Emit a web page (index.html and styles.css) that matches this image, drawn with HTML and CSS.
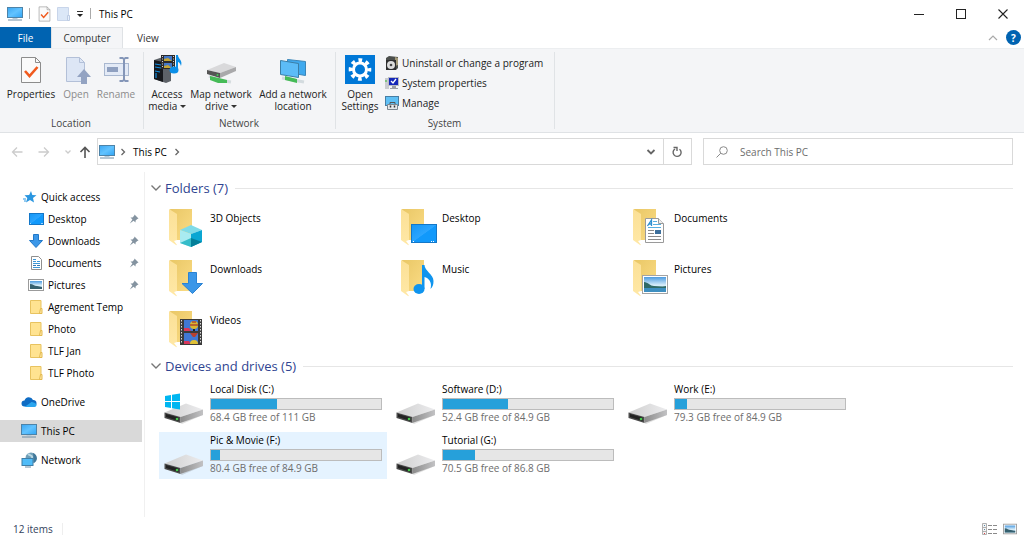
FILE: index.html
```html
<!DOCTYPE html>
<html lang="en">
<head>
    <meta charset="utf-8">
    <title>This PC</title>
    <link rel="stylesheet" href="styles.css">
</head>

<body>
    <!-- shared icons -->
    <svg class="sprite" aria-hidden="true">
        <defs>
            <linearGradient id="screenblue" x1="0" y1="0" x2="1" y2="1">
                <stop offset="0" stop-color="#3aa6f2" />
                <stop offset="0.5" stop-color="#62c3ff" />
                <stop offset="1" stop-color="#2fa4f5" />
            </linearGradient>
            <linearGradient id="deskblue" x1="0" y1="0" x2="1" y2="1">
                <stop offset="0" stop-color="#1496f5" />
                <stop offset="0.5" stop-color="#2ba5ff" />
                <stop offset="0.52" stop-color="#1199fb" />
                <stop offset="1" stop-color="#1199fb" />
            </linearGradient>
            <linearGradient id="folderback" x1="0" y1="0" x2="1" y2="1">
                <stop offset="0" stop-color="#e9c766" />
                <stop offset="1" stop-color="#fbdc85" />
            </linearGradient>
            <linearGradient id="folderflap" x1="0" y1="0" x2="0" y2="1">
                <stop offset="0" stop-color="#fbe096" />
                <stop offset="1" stop-color="#ffe8a6" />
            </linearGradient>
            <linearGradient id="landscape" x1="0" y1="0" x2="0" y2="1">
                <stop offset="0" stop-color="#4c9be0" />
                <stop offset="0.55" stop-color="#d9eefa" />
                <stop offset="1" stop-color="#8fc3dd" />
            </linearGradient>
            <linearGradient id="drivetop" x1="0" y1="0" x2="1" y2="0">
                <stop offset="0" stop-color="#cfcfcf" />
                <stop offset="1" stop-color="#ececee" />
            </linearGradient>
            <linearGradient id="driveside" x1="0" y1="0" x2="1" y2="0">
                <stop offset="0" stop-color="#8b8b8b" />
                <stop offset="1" stop-color="#c2c2c4" />
            </linearGradient>
        </defs>
        <symbol id="pc" viewBox="0 0 16 16">
            <rect x="0.5" y="1.500" width="15" height="10" fill="url(#screenblue)" stroke="#4d83a8" />
            <path d="M5.500 12h5v1h-5z" fill="#b9cbd8" />
            <path d="M1 14h14" stroke="#6f8ea6" />
        </symbol>
        <symbol id="doccheck" viewBox="0 0 22 28">
            <path d="M1.500 1.500h14l5 5v20h-19z" fill="#fafafa" stroke="#8c8c8c" />
            <path d="M15.500 1.500v5h5" fill="none" stroke="#8c8c8c" />
            <path d="M5 15l4.500 5 8-9" fill="none" stroke="#f05a1e" stroke-width="2.600" />
        </symbol>
        <symbol id="chevdown" viewBox="0 0 12 12">
            <path d="M1.500 3.500L6 8l4.500-4.500" fill="none" stroke="currentColor" stroke-width="1.400" />
        </symbol>
        <symbol id="chevright" viewBox="0 0 8 8">
            <path d="M2.500 1l3 3-3 3" fill="none" stroke="currentColor" stroke-width="1.300" />
        </symbol>
        <symbol id="pin" viewBox="0 0 10 10">
            <path d="M5.500 0.500l4 4-1.200 0.400L6.600 6.600 6.500 8.500 4.600 6.700 0.800 9.500 3.400 5.500 1.500 3.500l2-0.100L5.200 1.700z" fill="#8493a0" />
        </symbol>
        <symbol id="smallfolder" viewBox="0 0 16 16">
            <path d="M2.500 1.500h10.500v13h-10.500z" fill="#ffe391" stroke="#e8c360" />
            <path d="M12.500 9.500h1.500v5h-2.500z" fill="#ffe9a8" stroke="#e3b94e" />
        </symbol>
        <symbol id="picture" viewBox="0 0 16 16">
            <rect x="0.500" y="2.500" width="15" height="11" fill="#fff" stroke="#9b9b9b" />
            <rect x="2" y="4" width="12" height="8" fill="url(#landscape)" />
            <path d="M2 7c3 0 4 2 7 2 2 0 3 1 5 1v2H2z" fill="#35606f" />
        </symbol>
        <symbol id="folder" viewBox="0 0 40 40">
            <path d="M6 2h22v31H12z" fill="url(#folderback)" />
            <path d="M5 2l8 5v30.500c0 0.700-0.500 0.800-1 0.500l-7-5z" fill="url(#folderflap)" />
            <path d="M10 34l3-1v5z" fill="#fff" />
        </symbol>
        <symbol id="drive" viewBox="0 0 40 40">
            <path d="M1 30l16 8 22-10v2L18 39z" fill="#000" opacity="0.120" />
            <path d="M0.500 27.500L22 18.500l17 6-22.500 7.500z" fill="url(#drivetop)" />
            <path d="M0.500 27.500l16 4.500v6L0.500 33z" fill="#4a4a4a" />
            <path d="M2 29l12.500 3.500v3.500L2 32z" fill="#222" />
            <path d="M16.500 32L39 24.500V30l-22.500 8z" fill="url(#driveside)" />
            <circle cx="13" cy="34" r="1.300" fill="#45c74c" />
        </symbol>
    </svg>

    <header class="titlebar">
        <svg class="icon16"><use href="#pc" /></svg>
        <span class="tick"></span>
        <button class="quick" aria-label="Properties"><svg width="13" height="16"><use href="#doccheck" /></svg></button>
        <button class="quick" aria-label="New folder">
            <svg width="13" height="16"><path d="M0.500 1.500h11v13H0.500z" fill="#dbe7f7" stroke="#c8d5ea" /><path d="M10.500 9.500h2v5h-2z" fill="#e6effb" stroke="#bccbe3" /></svg>
        </button>
        <button class="quick" aria-label="Customize toolbar">
            <svg width="8" height="8"><path d="M1 1.500h6" stroke="#333" /><path d="M1 4h6L4 7z" fill="#222" /></svg>
        </button>
        <span class="tick"></span>
        <h1>This PC</h1>
        <div class="window-buttons">
            <button aria-label="Minimize"><svg width="10" height="10"><path d="M0 5.500h10" stroke="#222" /></svg></button>
            <button aria-label="Maximize"><svg width="10" height="10"><rect x="0.500" y="0.500" width="9" height="9" fill="none" stroke="#222" /></svg></button>
            <button aria-label="Close"><svg width="10" height="10"><path d="M0.500 0.500l9 9M9.500 0.500l-9 9" stroke="#222" stroke-width="1.100" /></svg></button>
        </div>
    </header>

    <nav class="tabs">
        <button class="tab file">File</button>
        <button class="tab active">Computer</button>
        <button class="tab">View</button>
        <div class="tabs-end">
            <button aria-label="Collapse ribbon"><svg width="10" height="10"><path d="M1 7l4-4 4 4" fill="none" stroke="#aaa" stroke-width="1.200" /></svg></button>
            <button class="help" aria-label="Help">?</button>
        </div>
    </nav>

    <section class="ribbon">
        <div class="group">
            <div class="tools">
                <button class="tool properties">
                    <svg width="32" height="32"><use href="#doccheck" x="5" y="4" width="22" height="28" /></svg>
                    Properties
                </button>
                <button class="tool open" disabled>
                    <svg width="32" height="32">
                        <path d="M6.500 5.500h13l5 5v19h-18z" fill="#dde6f5" stroke="#b3c0d8" />
                        <path d="M19.500 5.500v5h5" fill="none" stroke="#b3c0d8" />
                        <path d="M17 25l7-8 7 8h-4v7h-6v-7z" fill="#93a3c2" />
                    </svg>
                    Open
                </button>
                <button class="tool rename" disabled>
                    <svg width="32" height="32">
                        <rect x="4.500" y="11.500" width="24" height="12" fill="#e3eaf6" stroke="#a9b8d0" />
                        <rect x="7" y="15" width="11" height="5" fill="#8fa0c0" />
                        <path d="M19.500 6h3l1.500 1 1.500-1h3M19.500 29h3l1.500-1 1.500 1h3M24 7v21" fill="none" stroke="#8496b8" stroke-width="2" />
                    </svg>
                    Rename
                </button>
            </div>
            <h2>Location</h2>
        </div>

        <div class="group">
            <div class="tools">
                <button class="tool access">
                    <svg width="32" height="32">
                        <path d="M3 8l9-3 8 2v22l-5 2-12-4z" fill="#5d6268" />
                        <path d="M3 8l9 2v20l-9-3z" fill="#17191d" />
                        <path d="M4 12l6 1M4 15l6 1M5 21v5M4 19l5 1" stroke="#148ee0" stroke-width="1.200" />
                        <rect x="10" y="3" width="14" height="14" fill="#2b2b2b" />
                        <path d="M11.500 4v12M22.500 4v12" stroke="#d0d0d0" stroke-dasharray="1 1.500" />
                        <path d="M13 4h8v5h-8zM13 11h8v5h-8z" fill="#4478c8" />
                        <path d="M13 7l4-1 4 3h-8zM13 14l4-1 4 3h-8z" fill="#c6a634" />
                        <ellipse cx="23" cy="18" rx="4.500" ry="3.500" fill="#0b8fe8" />
                        <path d="M25 3h2c0 4 5 5 3 11-1-3-2-4-3-4v8h-2z" fill="#0b8fe8" />
                    </svg>
                    <span>Access<br>media <i class="caret"></i></span>
                </button>
                <button class="tool map">
                    <svg width="32" height="32">
                        <path d="M4 24l8 4 14 2" fill="none" stroke="#d5dcdf" stroke-width="3" />
                        <path d="M5 24l9 2 8 2v3H13l-8-3z" fill="#45bb57" />
                        <path d="M2 18l17-7 12 4-16 6z" fill="#d9d9db" />
                        <path d="M2 18l13 3v5L2 22z" fill="#555" />
                        <path d="M15 21l16-6v4l-16 7z" fill="#a9a9ab" />
                        <circle cx="12.500" cy="23" r="1" fill="#4c5" />
                    </svg>
                    <span>Map network<br>drive <i class="caret"></i></span>
                </button>
                <button class="tool add">
                    <svg width="32" height="32">
                        <path d="M10.500 7.500l18 2v14l-18-3z" fill="#3fa9ee" stroke="#3b86b8" />
                        <path d="M5 26l22 4" stroke="#d3dbdf" stroke-width="3" />
                        <path d="M8 24l12 3v4l-12-3z" fill="#45bb57" />
                        <path d="M3.500 8.500l18 3v14l-18-3z" fill="#5cbcf7" stroke="#3b7fa8" />
                    </svg>
                    <span>Add a network<br>location</span>
                </button>
            </div>
            <h2>Network</h2>
        </div>

        <div class="group">
            <div class="tools">
                <button class="tool settings">
                    <svg width="32" height="32">
                        <rect x="1" y="3" width="30" height="29" fill="#0078d7" />
                        <circle cx="16" cy="17.500" r="9.300" fill="none" stroke="#fff" stroke-width="4" stroke-dasharray="3.650 3.650" stroke-dashoffset="1.800" />
                        <circle cx="16" cy="17.500" r="6.500" fill="none" stroke="#fff" stroke-width="3" />
                    </svg>
                    <span>Open<br>Settings</span>
                </button>
                <ul class="commands">
                    <li><button>
                        <svg width="14" height="16"><path d="M1 3l3-2 9 1v11l-2 2H1z" fill="#4c4f4c" /><path d="M10 2l3 1v7l-3 1z" fill="#a49a79" /><rect x="1" y="5" width="10" height="10" fill="#2e2e2e" /><circle cx="6" cy="10" r="4" fill="#dcdcdc" /><circle cx="6" cy="10" r="1.300" fill="#444" /></svg>
                        Uninstall or change a program
                    </button></li>
                    <li><button>
                        <svg width="14" height="16"><path d="M0 3h4v11H0z" fill="#c9ccd0" /><path d="M1 5v2" stroke="#3b3" /><rect x="3.500" y="2.500" width="10" height="8" fill="#1527b8" stroke="#b9bcc4" /><path d="M6 6l2 2 3-4" fill="none" stroke="#fff" stroke-width="1.300" /><path d="M7 11h4v2h2v1H5v-1h2z" fill="#9a9da4" /></svg>
                        System properties
                    </button></li>
                    <li><button>
                        <svg width="14" height="16"><rect x="0.500" y="1.500" width="13" height="9" fill="#5fc0f5" stroke="#477ea4" /><path d="M2.500 9.500h10v5h-10z" fill="#e6e9eb" stroke="#7c8790" /><path d="M5 9V7.500h5V9" fill="none" stroke="#555" /><path d="M5.500 10.500v2M9.500 10.500v2" stroke="#333" stroke-width="1.500" /></svg>
                        Manage
                    </button></li>
                </ul>
            </div>
            <h2>System</h2>
        </div>
    </section>

    <section class="navbar">
        <div class="history">
            <button aria-label="Back" disabled><svg width="12" height="12"><path d="M11.500 6H1.500M6 1.500L1.500 6 6 10.500" /></svg></button>
            <button aria-label="Forward" disabled><svg width="12" height="12"><path d="M0.500 6h10M6 1.500L10.500 6 6 10.500" /></svg></button>
            <button class="recent" aria-label="Recent locations" disabled><svg width="6" height="6"><path d="M0.500 1.500L3 4l2.500-2.500" /></svg></button>
            <button class="up" aria-label="Up"><svg width="12" height="12"><path d="M6 12V1.500M1.500 6L6 1.500 10.500 6" /></svg></button>
        </div>
        <div class="address">
            <svg class="icon16"><use href="#pc" /></svg>
            <svg class="crumb-arrow"><use href="#chevright" /></svg>
            <a href="#">This PC</a>
            <svg class="crumb-arrow"><use href="#chevright" /></svg>
            <button class="previous" aria-label="Previous locations"><svg width="10" height="10"><path d="M1.500 3L5 6.500 8.500 3" fill="none" stroke="#666" stroke-width="1.800" /></svg></button>
            <button class="refresh" aria-label="Refresh"><svg width="12" height="12"><path d="M8.500 3.200A4 4 0 1 1 4 3" fill="none" stroke="#666" stroke-width="1.400" /><path d="M2.500 1.500H6V5" fill="none" stroke="#666" stroke-width="1.400" /></svg></button>
        </div>
        <label class="search">
            <svg width="12" height="12"><circle cx="7.500" cy="4.500" r="3.800" fill="none" stroke="#8a8a8a" /><path d="M4.800 7.200L0.500 11.500" stroke="#8a8a8a" /></svg>
            <input type="text" placeholder="Search This PC" aria-label="Search This PC">
        </label>
    </section>

    <div class="main">
        <nav class="sidebar">
            <ul>
                <li><a href="#">
                    <svg class="icon16" viewBox="0 0 16 16"><path d="M10 2l1.300 4 4.200 0.300-3.500 2.700 1 4.500-4-2.500-4 2.500 1.300-4.500L3.500 6.300l4.700-0.300z" fill="#2a96e0" /><path d="M2 10h3M3 12h2" stroke="#2a96e0" /></svg>
                    Quick access
                </a></li>
                <li class="sub"><a href="#">
                    <svg class="icon16" viewBox="0 0 16 16"><rect x="1.500" y="2.500" width="14" height="11" fill="url(#deskblue)" stroke="#1377c8" /><path d="M2 12.500h1M13 12.500h2" stroke="#9fd4ff" /></svg>
                    Desktop
                    <svg class="pin"><use href="#pin" /></svg>
                </a></li>
                <li class="sub"><a href="#">
                    <svg class="icon16" viewBox="0 0 16 16"><path d="M5.500 1.500h5v6h4L8 14.500 1.500 7.500h4z" fill="#3b97e8" stroke="#2178c8" /></svg>
                    Downloads
                    <svg class="pin"><use href="#pin" /></svg>
                </a></li>
                <li class="sub"><a href="#">
                    <svg class="icon16" viewBox="0 0 16 16"><path d="M3.500 1.500h7l3 3v10h-10z" fill="#fff" stroke="#8f8f8f" /><path d="M5 4.500h3M5 6.500h3M9 6.500h3M5 8.500h7M5 12.500h7" stroke="#3d97d6" /><path d="M5 10.500h3M9 10.500h3" stroke="#3778b0" /></svg>
                    Documents
                    <svg class="pin"><use href="#pin" /></svg>
                </a></li>
                <li class="sub"><a href="#">
                    <svg class="icon16"><use href="#picture" /></svg>
                    Pictures
                    <svg class="pin"><use href="#pin" /></svg>
                </a></li>
                <li class="sub"><a href="#"><svg class="icon16"><use href="#smallfolder" /></svg> Agrement Temp</a></li>
                <li class="sub"><a href="#"><svg class="icon16"><use href="#smallfolder" /></svg> Photo</a></li>
                <li class="sub"><a href="#"><svg class="icon16"><use href="#smallfolder" /></svg> TLF Jan</a></li>
                <li class="sub"><a href="#"><svg class="icon16"><use href="#smallfolder" /></svg> TLF Photo</a></li>
            </ul>
            <ul>
                <li><a href="#">
                    <svg class="icon16" viewBox="0 0 16 16"><path d="M3.500 12.500a3 3 0 0 1 0-6 4.500 4.500 0 0 1 8.500-0.500 3.300 3.300 0 0 1 1 6.500z" fill="#0f6cc4" /><path d="M3.500 13l7-5c1 0 5 1 5 3 0 1-1 2-2 2z" fill="#2aa5ee" /></svg>
                    OneDrive
                </a></li>
            </ul>
            <ul>
                <li class="selected"><a href="#"><svg class="icon16"><use href="#pc" /></svg> This PC</a></li>
            </ul>
            <ul>
                <li><a href="#">
                    <svg class="icon16" viewBox="0 0 16 16"><circle cx="10" cy="6" r="5.500" fill="#6f9fb8" /><path d="M7 2c2 2 5 1 4 4" fill="none" stroke="#b9d6e2" stroke-width="2" /><path d="M12 1c5 2 5 8 1 10z" fill="#41789a" /><rect x="1" y="6.500" width="11" height="7" fill="#50bcf8" stroke="#3f7fa8" /><path d="M4 15h6" stroke="#6f8ea6" /></svg>
                    Network
                </a></li>
            </ul>
        </nav>

        <main class="content">
            <section>
                <h2><svg width="12" height="12"><use href="#chevdown" /></svg> <span>Folders (7)</span></h2>
                <ul class="tiles">
                    <li class="tile">
                        <svg class="icon40"><use href="#folder" /><path d="M16 23l11-5 11 5-11 4z" fill="#7fdbe8" /><path d="M16 23l11 4v13l-11-4z" fill="#a9ebf1" /><path d="M27 27l11-4v12l-11 5z" fill="#0aa6d2" /><path d="M16 36l11-5v9z" fill="#35bcc9" /><path d="M27 31l11 4-11 5z" fill="#057f99" /></svg>
                        <p>3D Objects</p>
                    </li>
                    <li class="tile">
                        <svg class="icon40"><use href="#folder" /><rect x="15.500" y="17.500" width="25" height="18" fill="url(#deskblue)" stroke="#1377c8" /><path d="M17 34.500h2M35 34.500h4" stroke="#fff" stroke-dasharray="1 1" /></svg>
                        <p>Desktop</p>
                    </li>
                    <li class="tile">
                        <svg class="icon40"><use href="#folder" /><path d="M17.500 11.500h13l5 5v19h-18z" fill="#fff" stroke="#9a9a9a" /><path d="M30.500 11.500v5h5" fill="#eee" stroke="#9a9a9a" /><path d="M19.500 19l4-6v6M21 17h3" fill="none" stroke="#2d8fd0" stroke-width="1.300" /><path d="M25 14.500h4M25 17.500h8M20 20.500h13" stroke="#58aee0" /><path d="M20 23.500h6M20 26.500h6M20 29.500h13M20 32.500h13" stroke="#8a8a8a" /><rect x="27" y="23" width="6" height="4" fill="#3d6f9c" /></svg>
                        <p>Documents</p>
                    </li>
                    <li class="tile">
                        <svg class="icon40"><use href="#folder" /><path d="M24.500 14.500h8v11h6L28.500 35.500 18 25.500h6.500z" fill="#3b97e8" stroke="#2b83d3" /></svg>
                        <p>Downloads</p>
                    </li>
                    <li class="tile">
                        <svg class="icon40"><use href="#folder" /><ellipse cx="23" cy="31" rx="5.500" ry="5" fill="#0f94ee" /><path d="M26 7h2.500c0 6 9 9 9 16 0 4-1 6-3 8 2-7-2-11-6-12v12H26z" fill="#0f94ee" /></svg>
                        <p>Music</p>
                    </li>
                    <li class="tile">
                        <svg class="icon40"><use href="#folder" /><rect x="14.500" y="17.500" width="25" height="18" fill="#fff" stroke="#a3a3a3" /><rect x="16" y="19" width="22" height="15" fill="url(#landscape)" /><path d="M16 24c4 0 6 4 10 4s9 1 12 0v2H16z" fill="#2f6a66" /><path d="M16 30h22v4H16z" fill="#3e8fc0" /></svg>
                        <p>Pictures</p>
                    </li>
                    <li class="tile">
                        <svg class="icon40"><use href="#folder" /><rect x="16" y="10" width="22" height="26" fill="#3b3b3b" /><path d="M17.500 11v24M36.500 11v24" stroke="#dadada" stroke-dasharray="1.500 1.500" /><path d="M20 11h14v11H20zM20 24h14v11H20z" fill="#4078d4" /><path d="M20 19h5l2 3h-7zM20 32h5l2 3h-7z" fill="#d8385c" /><circle cx="30" cy="16" r="4" fill="#d9b72f" /><path d="M26 16h8M28 13h4" stroke="#b04a2f" stroke-width="1.500" /><path d="M29 20h2v2h-2z" fill="#222" /><path d="M26 24h8l-3 4h-2z" fill="#b8402f" /><path d="M26 35a4 4 0 0 1 8 0z" fill="#e0c136" /></svg>
                        <p>Videos</p>
                    </li>
                </ul>
            </section>

            <section>
                <h2><svg width="12" height="12"><use href="#chevdown" /></svg> <span>Devices and drives (5)</span></h2>
                <ul class="tiles drives">
                    <li class="tile">
                        <svg class="icon40"><use href="#drive" /><path d="M1 11l6-1v6H1zM8 9.800l8-1.300V16H8zM1 17h6v6l-6-1zM8 17h8v7.500l-8-1.300z" fill="#00b6f1" /></svg>
                        <div class="info">
                            <p>Local Disk (C:)</p>
                            <div class="bar"><div style="width: 39%"></div></div>
                            <p class="free">68.4 GB free of 111 GB</p>
                        </div>
                    </li>
                    <li class="tile">
                        <svg class="icon40"><use href="#drive" /></svg>
                        <div class="info">
                            <p>Software (D:)</p>
                            <div class="bar"><div style="width: 38%"></div></div>
                            <p class="free">52.4 GB free of 84.9 GB</p>
                        </div>
                    </li>
                    <li class="tile">
                        <svg class="icon40"><use href="#drive" /></svg>
                        <div class="info">
                            <p>Work (E:)</p>
                            <div class="bar"><div style="width: 7%"></div></div>
                            <p class="free">79.3 GB free of 84.9 GB</p>
                        </div>
                    </li>
                    <li class="tile hover">
                        <svg class="icon40"><use href="#drive" /></svg>
                        <div class="info">
                            <p>Pic &amp; Movie (F:)</p>
                            <div class="bar"><div style="width: 5%"></div></div>
                            <p class="free">80.4 GB free of 84.9 GB</p>
                        </div>
                    </li>
                    <li class="tile">
                        <svg class="icon40"><use href="#drive" /></svg>
                        <div class="info">
                            <p>Tutorial (G:)</p>
                            <div class="bar"><div style="width: 19%"></div></div>
                            <p class="free">70.5 GB free of 86.8 GB</p>
                        </div>
                    </li>
                </ul>
            </section>
        </main>
    </div>

    <footer class="statusbar">
        <span>12 items</span>
        <div class="views">
            <button aria-label="Details view"><svg width="16" height="14"><path d="M0.500 1.500h4v11h-4zM0.500 5.500h4M0.500 9.500h4" fill="#f4f4f4" stroke="#b0b0b0" /><path d="M6 3.500h4M11 3.500h4M6 7.500h4M11 7.500h4M6 11.500h4M11 11.500h4" stroke="#8a8a8a" /><path d="M2 3.500h1M2 7.500h1" stroke="#58a" /><path d="M2 11.500h1" stroke="#d44" /></svg></button>
            <button aria-label="Large icons view"><svg width="14" height="14"><use href="#picture" /></svg></button>
        </div>
    </footer>
</body>
</html>
```

FILE: styles.css
```css
* {
    box-sizing: border-box;
}
body {
    margin: 0;
    min-height: 100vh;
    display: flex;
    flex-direction: column;
    background: #fff;
    color: #000;
    font-family: "Open Sans", "Noto Sans", sans-serif;
    font-size: 10px;
    line-height: 12px;
}
button, input {
    font: inherit;
    color: inherit;
    background: none;
    border: 0;
    padding: 0;
    margin: 0;
}
ul {
    list-style: none;
    margin: 0;
    padding: 0;
}
h1, h2, p {
    margin: 0;
    font-size: inherit;
    font-weight: normal;
}
a {
    color: inherit;
    text-decoration: none;
}
svg {
    display: block;
    flex: none;
}
.sprite {
    position: absolute;
    width: 0;
    height: 0;
}
.icon16 {
    width: 16px;
    height: 16px;
}
.icon40 {
    width: 40px;
    height: 40px;
    overflow: visible;
}

/* title bar */
.titlebar {
    display: flex;
    align-items: center;
    gap: 6px;
    height: 27px;
    padding-left: 7px;
}
.tick {
    width: 1px;
    height: 11px;
    background: #aaa;
    margin-right: 2px;
}
.window-buttons {
    display: flex;
    margin-left: auto;
}
.window-buttons button {
    width: 42px;
    height: 27px;
    display: flex;
    align-items: center;
    justify-content: center;
}

/* tabs */
.tabs {
    display: flex;
    height: 21px;
}
.tab {
    padding: 0 14px;
    color: #333;
}
.tab.file {
    width: 51px;
    background: #0063b1;
    color: #fff;
}
.tab.active {
    width: 72px;
    padding: 0;
    background: #f4f5f7;
    border: 1px solid #dfe2e5;
    border-bottom: 0;
}
.tabs-end {
    display: flex;
    align-items: center;
    gap: 8px;
    margin-left: auto;
    padding-right: 3px;
}
.help {
    width: 15px;
    height: 15px;
    border-radius: 50%;
    background: #0063b1;
    color: #fff;
    font-weight: bold;
}

/* ribbon */
.ribbon {
    display: flex;
    background: #f4f5f7;
    border-bottom: 1px solid #dfe2e5;
    padding: 4px 0 3px;
    box-shadow: inset 0 1px #eceef0;
}
.group {
    display: flex;
    flex-direction: column;
    justify-content: space-between;
    height: 77px;
    padding: 0 3px 0 2px;
    border-right: 1px solid #e0e3e6;
}
.group h2 {
    text-align: center;
    color: #444;
}
.tools {
    display: flex;
}
.tool {
    display: flex;
    flex-direction: column;
    align-items: center;
    gap: 4px;
    height: 60px;
    white-space: nowrap;
    color: #222;
}
.tool:disabled {
    color: #8b8b8b;
}
.tool.properties {
    width: 58px;
}
.tool.open {
    width: 32px;
}
.tool.rename {
    width: 48px;
}
.tool.access {
    width: 42px;
}
.tool.map {
    width: 66px;
}
.tool.add {
    width: 78px;
}
.tool.settings {
    width: 44px;
}
.caret {
    display: inline-block;
    vertical-align: 2px;
    border: 3px solid transparent;
    border-top-color: #333;
    border-bottom: 0;
}
.commands {
    width: 169px;
    padding: 1px 0 0 3px;
}
.commands button {
    display: flex;
    align-items: center;
    gap: 3px;
    height: 20px;
    color: #222;
    white-space: nowrap;
}

/* address row */
.navbar {
    display: flex;
    padding: 5px 11px 7px;
}
.history {
    display: flex;
    width: 86px;
    color: #ccc;
}
.history button {
    display: flex;
    align-items: center;
    width: 27px;
}
.history .recent {
    width: 14px;
}
.history svg {
    fill: none;
    stroke: currentColor;
    stroke-width: 1.3px;
}
.history .up {
    width: 18px;
    color: #555;
}
.history .up svg {
    stroke-width: 1.6px;
}
.address {
    flex: 2;
    display: flex;
    align-items: center;
    gap: 3px;
    height: 27px;
    padding-left: 1px;
    border: 1px solid #d9d9d9;
}
.crumb-arrow {
    width: 10px;
    height: 8px;
    color: #666;
}
.address a {
    padding: 0 2px;
}
.previous {
    margin-left: auto;
    margin-right: 4px;
}
.refresh {
    width: 28px;
    height: 25px;
    padding-left: 7px;
    border-left: 1px solid #d9d9d9;
}
.search {
    flex: 1;
    display: flex;
    align-items: center;
    gap: 12px;
    height: 27px;
    margin-left: 11px;
    padding-left: 12px;
    border: 1px solid #d9d9d9;
}
.search input {
    flex: 1;
    min-width: 0;
    outline: 0;
}
.search input::placeholder {
    color: #6d6d6d;
    opacity: 1;
}

/* main area */
.main {
    flex: 1;
    display: flex;
}
.sidebar {
    width: 145px;
    padding-top: 14px;
    border-right: 1px solid #f0f0f0;
}
.sidebar ul {
    margin-bottom: 7px;
}
.sidebar li {
    padding-left: 21px;
    margin-right: 2px;
}
.sidebar li.sub {
    padding-left: 28px;
}
.sidebar li.selected {
    background: #d9d9d9;
}
.sidebar a {
    display: flex;
    align-items: center;
    gap: 4px;
    height: 22px;
}
.pin {
    width: 10px;
    height: 10px;
    margin-left: auto;
    margin-right: 3px;
}
.content {
    flex: 1;
    padding: 6px 11px 0 5px;
}
.content h2 {
    display: flex;
    align-items: center;
    gap: 3px;
    height: 20px;
    margin: 0 0 5px;
    color: #777;
    font-size: 13px;
}
.content h2 span {
    color: #2f4491;
}
.content h2::after {
    content: "";
    flex: 1;
    height: 1px;
    margin-left: 4px;
    background: #e6e6e6;
}
.tiles {
    display: grid;
    grid-template-columns: repeat(auto-fill, 228px);
    gap: 4px;
    padding: 0 0 4px 9px;
}
.tile {
    display: flex;
    gap: 6px;
    height: 47px;
    padding: 4px 5px;
}
.tile.hover {
    background: #e5f3ff;
}
.tiles p {
    padding-top: 5px;
}
.info {
    flex: 1;
}
.drives .info p {
    padding-top: 0;
    margin-top: -2px;
}
.drives .info .free {
    margin-top: 1px;
    color: #6d6d6d;
}
.bar {
    height: 12px;
    margin-top: 3px;
    background: #e6e6e6;
    border: 1px solid #bcbcbc;
}
.bar div {
    height: 100%;
    background: #26a0da;
}

/* status bar */
.statusbar {
    display: flex;
    align-items: center;
    height: 23px;
    padding: 0 7px 0 13px;
    color: #33425c;
}
.statusbar span {
    padding-right: 9px;
    border-right: 1px solid #eee;
}
.views {
    display: flex;
    gap: 5px;
    margin-left: auto;
}
```
